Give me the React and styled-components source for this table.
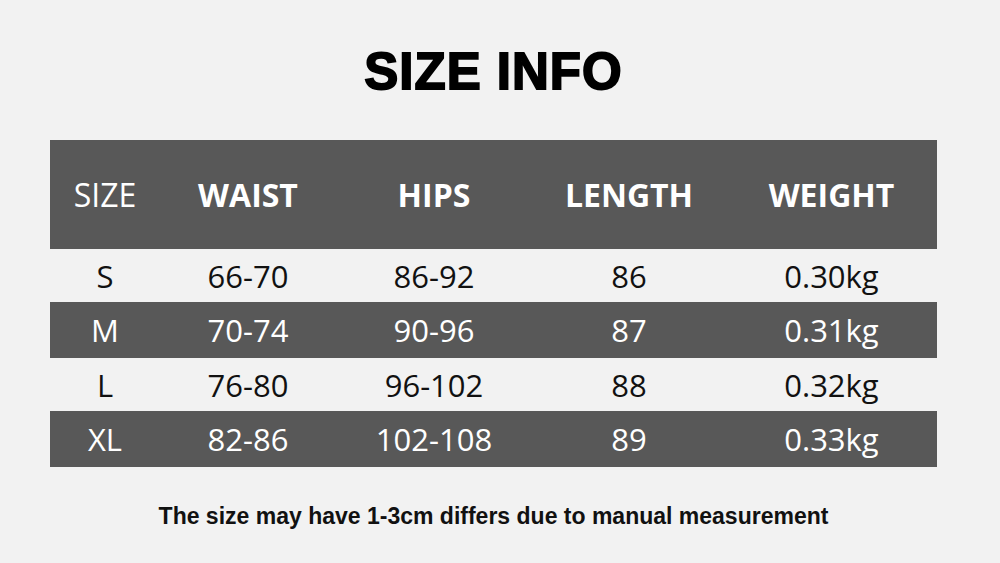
import React from "react";
import styled, { createGlobalStyle } from "styled-components";

const Global = createGlobalStyle`
  html, body { margin: 0; padding: 0; background: #f2f2f2; }
  body { width: 1000px; height: 563px; overflow: hidden; }
`;

const Page = styled.div`
  width: 1000px;
  height: 563px;
  box-sizing: border-box;
  padding-right: 13px;
  background: #f2f2f2;
  display: flex;
  flex-direction: column;
  align-items: center;
`;

const Title = styled.h1`
  margin: 44px 0 0;
  height: 96px;
  font-family: "Liberation Sans", Arial, sans-serif;
  font-weight: 700;
  font-size: 51px;
  line-height: 56px;
  color: #000;
  -webkit-text-stroke: 1.8px #000;
  letter-spacing: 1px;
`;

const Table = styled.div`
  width: 887px;
  display: grid;
  grid-template-columns: 110px 176px 196px 194px 211px;
`;

const Row = styled.div`
  display: contents;
`;

const Cell = styled.div`
  display: flex;
  align-items: center;
  justify-content: center;
  height: ${(p) => (p.$header ? "109px" : p.$dark ? "56px" : "53px")};
  background: ${(p) => (p.$dark ? "#585858" : "transparent")};
  color: ${(p) => (p.$dark ? "#fff" : "#111")};
  font-family: "Open Sans", "Noto Sans", sans-serif;
  font-size: ${(p) => (p.$header ? "32px" : "31px")};
  font-weight: ${(p) => (p.$bold ? 700 : 400)};
  box-sizing: border-box;
`;

const Note = styled.p`
  margin: 36px 0 0;
  font-family: "Liberation Sans", Arial, sans-serif;
  font-weight: 700;
  font-size: 23px;
  color: #111;
`;

const header = ["SIZE", "WAIST", "HIPS", "LENGTH", "WEIGHT"];
const rows = [
  ["S", "66-70", "86-92", "86", "0.30kg"],
  ["M", "70-74", "90-96", "87", "0.31kg"],
  ["L", "76-80", "96-102", "88", "0.32kg"],
  ["XL", "82-86", "102-108", "89", "0.33kg"],
];

export default function App() {
  return (
    <Page>
      <Global />
      <Title>SIZE INFO</Title>
      <Table>
        <Row>
          {header.map((h, i) => (
            <Cell key={h} $header $dark $bold={i > 0}>
              {h}
            </Cell>
          ))}
        </Row>
        {rows.map((r, ri) =>
          r.map((c, ci) => (
            <Cell key={ri + "-" + ci} $dark={ri % 2 === 1}>
              {c}
            </Cell>
          ))
        )}
      </Table>
      <Note>The size may have 1-3cm differs due to manual measurement</Note>
    </Page>
  );
}
